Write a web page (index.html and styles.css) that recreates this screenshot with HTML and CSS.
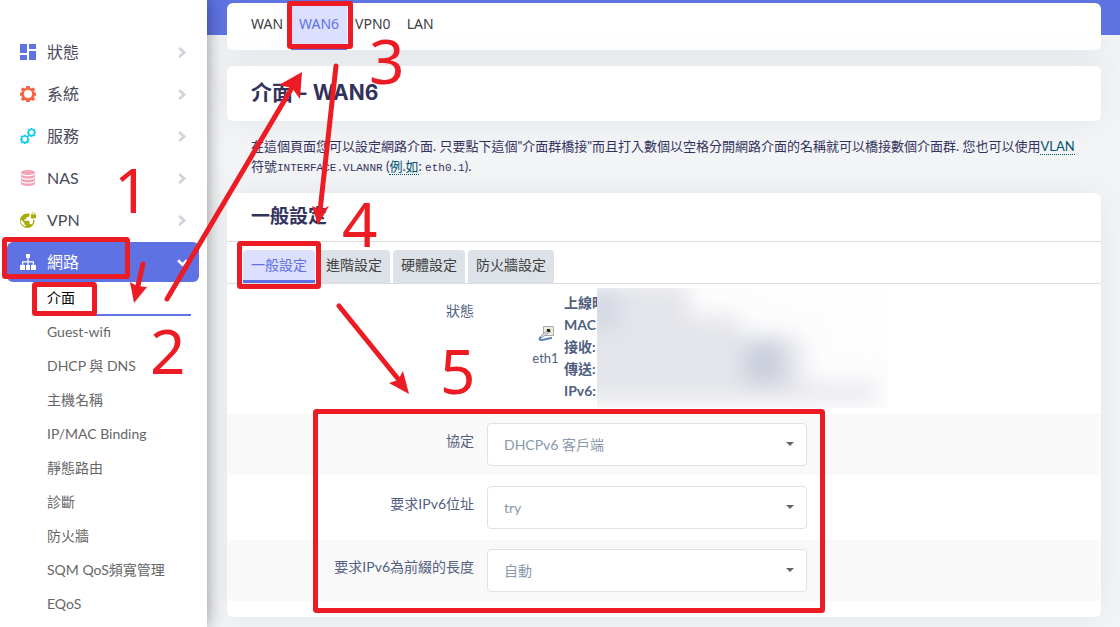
FILE: index.html
```html
<!DOCTYPE html>
<html lang="zh-Hant">
<head>
    <meta charset="utf-8">
    <title>介面 - WAN6</title>
    <meta name="viewport" content="width=device-width, initial-scale=1">
    <link rel="stylesheet" href="styles.css">
</head>
<body>

<nav class="sidebar">
    <ul class="menu">
        <li><a href="#" class="menu-item">
            <svg class="icon blue" viewBox="0 0 16 16"><path d="M0 0h7v9H0zM9 0h7v5H9zM0 11h7v5H0zM9 7h7v9H9z"/></svg>
            <span>狀態</span>
            <svg class="arrow" viewBox="0 0 10 10"><path d="M2 1l4.500 4L2 9"/></svg>
        </a></li>
        <li><a href="#" class="menu-item">
            <svg class="icon orange" viewBox="0 0 16 16"><use href="#gear"/></svg>
            <span>系統</span>
            <svg class="arrow" viewBox="0 0 10 10"><path d="M2 1l4.500 4L2 9"/></svg>
        </a></li>
        <li><a href="#" class="menu-item">
            <svg class="icon cyan" viewBox="0 0 16 16"><use href="#gear" x="0" y="6.500" width="9.500" height="9.500"/><use href="#gear" x="7" y="0" width="9" height="9"/></svg>
            <span>服務</span>
            <svg class="arrow" viewBox="0 0 10 10"><path d="M2 1l4.500 4L2 9"/></svg>
        </a></li>
        <li><a href="#" class="menu-item">
            <svg class="icon pink" viewBox="0 0 16 16"><path d="M1 2.500C1 1 4 0 8 0s7 1 7 2.500S12 5 8 5 1 4 1 2.500z"/><path d="M1 4.300c1.500 1.400 4 1.900 7 1.900s5.500-.5 7-1.900v2C15 7.800 12 8.700 8 8.700S1 7.800 1 6.300z"/><path d="M1 8c1.500 1.400 4 1.900 7 1.900s5.500-.5 7-1.900v2c0 1.500-3 2.400-7 2.400S1 11.500 1 10z"/><path d="M1 11.700c1.500 1.400 4 1.900 7 1.900s5.500-.5 7-1.900v1.800C15 15 12 16 8 16s-7-1-7-2.500z"/></svg>
            <span>NAS</span>
            <svg class="arrow" viewBox="0 0 10 10"><path d="M2 1l4.500 4L2 9"/></svg>
        </a></li>
        <li><a href="#" class="menu-item">
            <svg class="icon olive" viewBox="1 1 22 22"><path d="M22 4v-.5a2.500 2.500 0 0 0-5 0V4c-.55 0-1 .45-1 1v4c0 .55.45 1 1 1h5c.55 0 1-.45 1-1V5c0-.55-.45-1-1-1zm-.8 0h-3.400v-.5a1.700 1.700 0 0 1 3.400 0V4zm-2.280 8c.04.33.08.66.08 1 0 2.080-.8 3.970-2.100 5.390-.26-.81-1-1.390-1.900-1.390h-1v-3c0-.55-.45-1-1-1H7v-2h2c.55 0 1-.45 1-1V8h2c1.100 0 2-.9 2-2V3.460A10 10 0 1 0 20.950 12h-2.030zM10 20.930A8 8 0 0 1 2.210 11.210L7 16v1c0 1.100.9 2 2 2v1.930z"/></svg>
            <span>VPN</span>
            <svg class="arrow" viewBox="0 0 10 10"><path d="M2 1l4.500 4L2 9"/></svg>
        </a></li>
        <li><a href="#" class="menu-item active">
            <svg class="icon" viewBox="0 0 16 16"><path d="M6 0h4v4H8.600v3.300H14V11h2v5h-5v-5h1.700V8.600H8.600V11H10v5H6v-5h1.400V8.600H3.300V11H5v5H0v-5h2V7.300h5.400V4H6z"/></svg>
            <span>網路</span>
            <svg class="arrow" viewBox="0 0 10 10"><path d="M1 3l4 4 4-4"/></svg>
        </a>
            <ul class="submenu">
                <li><a href="#" class="current">介面</a></li>
                <li><a href="#">Guest-wifi</a></li>
                <li><a href="#">DHCP 與 DNS</a></li>
                <li><a href="#">主機名稱</a></li>
                <li><a href="#">IP/MAC Binding</a></li>
                <li><a href="#">靜態路由</a></li>
                <li><a href="#">診斷</a></li>
                <li><a href="#">防火牆</a></li>
                <li><a href="#">SQM QoS頻寬管理</a></li>
                <li><a href="#">EQoS</a></li>
            </ul>
        </li>
    </ul>
</nav>

<main class="main">
    <nav class="card iface-tabs">
        <a href="#">WAN</a>
        <a href="#" class="active">WAN6</a>
        <a href="#">VPN0</a>
        <a href="#">LAN</a>
    </nav>

    <h1 class="card page-title">介面 - WAN6</h1>

    <p class="descr">在這個頁面您可以設定網路介面. 只要點下這個"介面群橋接"而且打入數個以空格分開網路介面的名稱就可以橋接數個介面群. 您也可以使用<abbr>VLAN</abbr> 符號<code>INTERFACE.VLANNR</code> (<abbr>例.如</abbr>: <code>eth0.1</code>).</p>

    <section class="card">
        <h2 class="section-title">一般設定</h2>
        <div class="tabs">
            <a href="#" class="active">一般設定</a>
            <a href="#">進階設定</a>
            <a href="#">硬體設定</a>
            <a href="#">防火牆設定</a>
        </div>
        <form class="rows">
            <div class="row status">
                <span class="label">狀態</span>
                <div class="status-info">
                    <div class="device">
                        <svg viewBox="0 0 16 16">
                            <path d="M5.500 1.500h10v9h-10z" fill="#ecece6" stroke="#aaa"/>
                            <path d="M8 4h5v4H8z" fill="#d5d08a"/><path d="M9 4h3v3H9z" fill="#1c1c18"/>
                            <path d="M9 6l-5 4-2 3 3-1 5-4z" fill="#dce2e8" stroke="#8a9299" stroke-width=".8"/>
                            <path d="M3 12c-2 1-2 3 0 3 4 0 7-2 11-2" fill="none" stroke="#5f83b5" stroke-width="2"/>
                        </svg>
                        <span>eth1</span>
                    </div>
                    <ul class="stats">
                        <li>上線時</li>
                        <li>MAC</li>
                        <li>接收:</li>
                        <li>傳送:</li>
                        <li>IPv6:</li>
                    </ul>
                    <svg class="redacted" viewBox="0 0 291 120">
                        <defs><filter id="soft" x="-20%" y="-40%" width="140%" height="180%"><feGaussianBlur stdDeviation="11"/></filter></defs>
                        <path d="M0 0h291v120H0z" fill="#fdfdfe"/>
                        <g filter="url(#soft)">
                            <path d="M-30-5H92V28h52v22h62v46h74v17H-30z" fill="#e4e5ea"/>
                            <path d="M-10 0h32v42H-10z" fill="#d3d8e3"/>
                            <path d="M148 50h38v46h-38z" fill="#c9cedb"/>
                        </g>
                    </svg>
                </div>
            </div>
            <div class="row striped">
                <label class="label" for="proto">協定</label>
                <div class="select"><select id="proto"><option>DHCPv6 客戶端</option></select></div>
            </div>
            <div class="row">
                <label class="label" for="reqaddress">要求IPv6位址</label>
                <div class="select"><select id="reqaddress"><option>try</option></select></div>
            </div>
            <div class="row striped">
                <label class="label" for="reqprefix">要求IPv6為前綴的長度</label>
                <div class="select"><select id="reqprefix"><option>自動</option></select></div>
            </div>
        </form>
    </section>
</main>

<!-- step marks -->
<svg class="marks" width="1120" height="627" viewBox="0 0 1120 627">
    <g class="boxes">
        <rect x="4.500" y="239.500" width="123" height="37" rx="1"/>
        <rect x="34.500" y="284.500" width="60" height="29" rx="1"/>
        <rect x="289.500" y="3.500" width="61" height="43" rx="1"/>
        <rect x="239.500" y="243.500" width="79" height="43" rx="1"/>
        <rect x="315.500" y="411.500" width="507" height="199" rx="1"/>
    </g>
    <g class="lines">
        <path d="M143 264l-6 26M167 299L293 86M336 66l-16 145M339 306l60 74"/>
    </g>
    <g class="heads">
        <path d="M134 303l-4-21 7 4 10 1z"/>
        <path d="M302 72l-23 13 13 3 8 11z"/>
        <path d="M318 225l-6-19 9 4 8-4z"/>
        <path d="M409 394l-20-11 9-3 5-9z"/>
    </g>
    <g class="digits">
        <text x="114" y="213">1</text>
        <text x="150" y="374">2</text>
        <text x="369" y="84">3</text>
        <text x="342" y="247">4</text>
        <text x="440" y="394">5</text>
    </g>
</svg>

<svg width="0" height="0" style="position:absolute">
    <defs>
        <symbol viewBox="0 0 16 16" id="gear"><path fill-rule="evenodd" d="M6.300 0h3.400l.5 2.200 1.100.4 1.900-1.200 1.900 1.900-1.200 1.900.4 1.100 1.700.5v2.700l-1.700.7-.4 1.100 1.200 1.900-1.900 1.900-1.900-1.200-1.100.4-.5 1.700H6.300l-.5-1.700-1.100-.4-1.900 1.200-1.900-1.900 1.200-1.900-.4-1.100L0 9.500V6.800l1.700-.5.4-1.100L.9 3.300l1.900-1.900 1.900 1.200 1.100-.4zM8 3.900a4.100 4.100 0 1 0 0 8.200 4.100 4.100 0 0 0 0-8.200z"/></symbol>
    </defs>
</svg>

</body>
</html>
```
FILE: styles.css
```css
* {
    box-sizing: border-box;
}
body {
    display: flex;
    min-height: 100vh;
    margin: 0;
    font-family: Lato, "Noto Sans CJK TC", sans-serif;
    font-size: 14px;
    color: #525f7f;
    background: #f3f4f6;
}
ul {
    margin: 0;
    padding: 0;
    list-style: none;
}
a {
    color: inherit;
    text-decoration: none;
}

/* Sidebar */
.sidebar {
    position: relative;
    z-index: 1;
    flex: none;
    width: 207px;
    padding: 32px 8px 0 7px;
    background: #fff;
    box-shadow: 0 0 16px rgba(0,0,0,.4);
}
.menu {
    display: flex;
    flex-direction: column;
    gap: 2px;
}
.menu-item {
    display: flex;
    align-items: center;
    height: 40px;
    padding: 0 11px 0 13px;
    border-radius: 6px;
    font-size: 16px;
    line-height: 20px;
    color: #4a4a5a;
}
.menu-item span {
    flex: 1;
    margin-left: 11px;
}
.menu-item.active {
    background: #5e72e4;
    color: #fff;
}
.icon {
    width: 16px;
    height: 16px;
    fill: currentColor;
}
.arrow {
    width: 11px;
    height: 11px;
    fill: none;
    stroke: #ced4da;
    stroke-width: 2.400;
}
.active .arrow {
    stroke: #fff;
}
.blue {color: #5e72e4;}
.orange {color: #fb6340;}
.cyan {color: #11cdef;}
.pink {color: #f3a4b5;}
.olive {color: #a8ad0b;}

.submenu a {
    display: block;
    height: 34px;
    margin: 0 8px 0 40px;
    line-height: 32px;
    color: #666;
}
.submenu .current {
    border-bottom: 2px solid #5e72e4;
    color: #000;
}

/* Content */
.main {
    flex: 1;
    min-width: 0;
    padding: 3px 19px 0 20px;
    background: linear-gradient(#5e72e4 35px, transparent 35px);
}
.card {
    border-radius: 6px;
    background: #fff;
    box-shadow: 0 0 32px rgba(136,152,170,.15);
}
.iface-tabs {
    display: flex;
    height: 47px;
    margin-bottom: 16px;
    padding: 0 16px;
    color: #404040;
    font-family: "Noto Sans", "Noto Sans CJK TC", sans-serif;
}
.iface-tabs a {
    padding: 0 8px;
    line-height: 42px;
}
.iface-tabs .active {
    border-bottom: 3px solid #5e72e4;
    background: #dce0fe;
    color: #5e72e4;
}
.page-title {
    height: 55px;
    margin: 0 0 15px;
    padding: 0 24px;
    font-family: Inter, "Noto Sans CJK TC", sans-serif;
    font-size: 21px;
    line-height: 54px;
    color: #32325d;
}
.descr {
    margin: 0;
    padding: 0 16px 15px 24px;
    font-size: 13px;
    line-height: 20px;
    color: #32325d;
}
.descr code {
    font-family: "Liberation Mono", monospace;
    font-size: 11px;
}
.descr abbr {
    border-bottom: 1px dotted #005470;
    color: #005470;
}
.section-title {
    height: 49px;
    margin: 0;
    padding: 0 24px;
    border-bottom: 1px solid #dcdcdc;
    font-size: 19px;
    line-height: 46px;
    color: #32325d;
}
.tabs {
    display: flex;
    gap: 3px;
    padding: 8px 16px 0;
    border-bottom: 1px solid #dcdcdc;
    color: #404040;
}
.tabs a {
    height: 33px;
    padding: 0 8px;
    border-radius: 4px 4px 0 0;
    background: #dce2e8;
    line-height: 29px;
}
.tabs .active {
    border-bottom: 3px solid #5e72e4;
    background: #dce0fe;
    color: #5e72e4;
}

/* Form rows */
.rows {
    display: grid;
    gap: 2px;
    padding-bottom: 16px;
}
.row {
    display: grid;
    grid-template-columns: 247px 1fr;
    gap: 13px;
    padding: 9px 0;
}
.striped {
    background: #f9f9f9;
}
.label {
    padding-top: 8px;
    text-align: right;
    line-height: 20px;
}
.status {
    padding: 4px 0;
}
.status .label {
    padding-top: 13px;
}
.status-info {
    display: flex;
    padding-left: 46px;
}
.device {
    display: flex;
    flex-direction: column;
    align-items: center;
    width: 25px;
    margin-right: 6px;
    padding-top: 36px;
    font-size: 13px;
    line-height: 20px;
}
.device svg {
    width: 16px;
    height: 18px;
    margin-bottom: 6px;
}
.stats {
    width: 33px;
    overflow: hidden;
    padding-top: 4px;
    font-weight: 700;
    line-height: 22px;
    white-space: nowrap;
}
.redacted {
    width: 291px;
    height: 120px;
    overflow: hidden;
}
.select {
    position: relative;
    width: 320px;
}
.select::after {
    content: "";
    position: absolute;
    top: 19px;
    right: 13px;
    border: 4px solid transparent;
    border-top-color: #666;
    pointer-events: none;
}
.select select {
    appearance: none;
    width: 100%;
    height: 43px;
    padding: 0 16px;
    border: 1px solid #dee2e6;
    border-radius: 4px;
    background: #fff;
    font: inherit;
    color: #8898aa;
}

/* Step marks drawn over the page */
.marks {
    position: absolute;
    top: 0;
    left: 0;
    z-index: 2;
    pointer-events: none;
}
.boxes, .lines {
    fill: none;
    stroke: #ed1c24;
    stroke-width: 5;
    stroke-linecap: round;
}
.heads, .digits {
    fill: #ed1c24;
}
.digits {
    font-family: "Noto Sans", sans-serif;
    font-size: 62px;
}
```
